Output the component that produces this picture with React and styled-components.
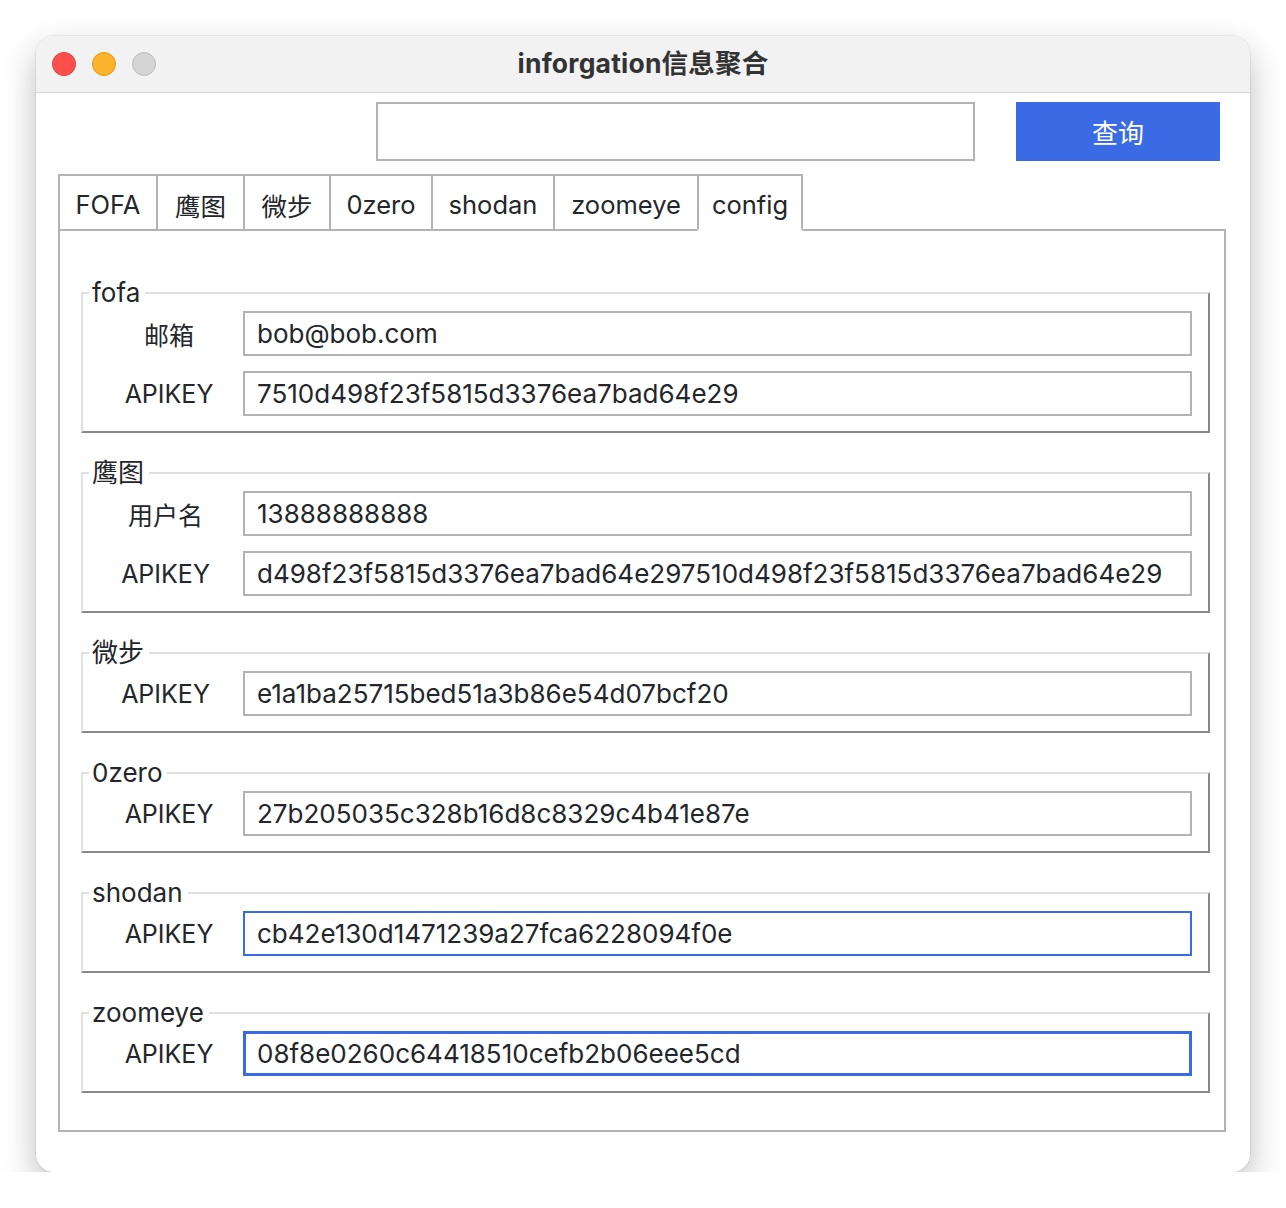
import React from 'react';
import styled, { createGlobalStyle } from 'styled-components';

const GlobalStyle = createGlobalStyle`
  html, body {
    margin: 0;
    padding: 0;
    background: #ffffff;
  }
  * {
    box-sizing: border-box;
  }
`;

const FONT = `Inter, "Noto Sans CJK SC", "Noto Sans", sans-serif`;

const Page = styled.div`
  padding: 36px 0 0 36px;
  font-family: ${FONT};
  color: #23262a;
`;

const Window = styled.div`
  width: 1214px;
  height: 1136px;
  background: #ffffff;
  border-radius: 18px;
  overflow: hidden;
  box-shadow: 0 0 0 1px rgba(0, 0, 0, 0.06), 0 14px 34px rgba(0, 0, 0, 0.26);
  display: flex;
  flex-direction: column;
`;

const TitleBar = styled.div`
  height: 57px;
  flex-shrink: 0;
  background: #f1f2f1;
  border-bottom: 1px solid #d5d5d5;
  display: flex;
  align-items: center;
  padding-left: 16px;
`;

const Lights = styled.div`
  display: flex;
  gap: 16px;
`;

const Light = styled.span`
  width: 24px;
  height: 24px;
  border-radius: 50%;
  background: ${p => p.$c};
  border: 1px solid ${p => p.$b};
`;

const Title = styled.div`
  flex: 1;
  text-align: center;
  margin-right: 120px;
  padding-bottom: 5px;
  font-size: 26.5px;
  font-weight: 700;
  color: #333;
  letter-spacing: 0.2px;
`;

const Body = styled.div`
  flex: 1;
  display: flex;
  flex-direction: column;
  padding: 9px 24px 40px 22px;
`;

const SearchRow = styled.div`
  display: flex;
  justify-content: flex-end;
  gap: 41px;
  padding-right: 6px;
`;

const SearchInput = styled.div`
  width: 599px;
  height: 59px;
  border: 2px solid #b3b3b3;
  background: #fff;
`;

const QueryButton = styled.button`
  width: 204px;
  height: 59px;
  border: none;
  background: #3a6be4;
  color: #fff;
  font-family: ${FONT};
  font-size: 26px;
  padding: 0;
`;

const TabBar = styled.div`
  display: flex;
  margin-top: 13px;
  height: 57px;
`;

const Tab = styled.div`
  display: flex;
  align-items: center;
  justify-content: center;
  width: ${p => p.$w}px;
  padding-top: 3px;
  font-size: 25.5px;
  border-top: 2px solid #b3b3b3;
  border-left: 2px solid #b3b3b3;
  border-right: ${p => (p.$last ? '2px solid #b3b3b3' : 'none')};
  border-bottom: ${p => (p.$active ? '2px solid transparent' : '2px solid #b3b3b3')};
  background: #fff;
`;

const TabFill = styled.div`
  flex: 1;
  border-bottom: 2px solid #b3b3b3;
`;

const Panel = styled.div`
  flex: 1;
  border: 2px solid #b3b3b3;
  border-top: none;
  padding: 47px 14px 0 21px;
  display: flex;
  flex-direction: column;
  gap: 25px;
`;

const Group = styled.fieldset`
  margin: 0;
  padding: 3px 16px 15px 12px;
  border-style: solid;
  border-width: 2px;
  border-color: #e0e0e0 #888888 #888888 #e0e0e0;
  display: flex;
  flex-direction: column;
  gap: 15px;
  min-width: 0;
`;

const Legend = styled.legend`
  margin-left: -6px;
  padding: 0 5px 0 3px;
  font-size: 26px;
  line-height: 30px;
`;

const Row = styled.div`
  display: grid;
  grid-template-columns: 148px 1fr;
  align-items: center;
`;

const Label = styled.div`
  text-align: center;
  font-size: 25px;
  padding-right: ${p => p.$shift || 0}px;
`;

const Field = styled.div`
  height: 45px;
  display: flex;
  align-items: center;
  padding-left: ${p => (p.$focus === 2 ? 11 : 12)}px;
  font-size: 26px;
  background: #fff;
  border: ${p =>
    p.$focus === 2 ? '3px solid #3a6be4' : p.$focus === 1 ? '2px solid #3a6be4' : '2px solid #b3b3b3'};
  white-space: nowrap;
  overflow: hidden;
`;

const tabs = [
  { name: 'FOFA', w: 98 },
  { name: '鹰图', w: 87 },
  { name: '微步', w: 86 },
  { name: '0zero', w: 102 },
  { name: 'shodan', w: 122 },
  { name: 'zoomeye', w: 144 },
  { name: 'config', w: 106 },
];

const groups = [
  {
    title: 'fofa',
    rows: [
      { label: '邮箱', value: 'bob@bob.com' },
      { label: 'APIKEY', value: '7510d498f23f5815d3376ea7bad64e29' },
    ],
  },
  {
    title: '鹰图',
    shift: 7,
    rows: [
      { label: '用户名', value: '13888888888' },
      { label: 'APIKEY', value: 'd498f23f5815d3376ea7bad64e297510d498f23f5815d3376ea7bad64e29' },
    ],
  },
  {
    title: '微步',
    shift: 7,
    rows: [{ label: 'APIKEY', value: 'e1a1ba25715bed51a3b86e54d07bcf20' }],
  },
  {
    title: '0zero',
    rows: [{ label: 'APIKEY', value: '27b205035c328b16d8c8329c4b41e87e' }],
  },
  {
    title: 'shodan',
    rows: [{ label: 'APIKEY', value: 'cb42e130d1471239a27fca6228094f0e', focus: 1 }],
  },
  {
    title: 'zoomeye',
    rows: [{ label: 'APIKEY', value: '08f8e0260c64418510cefb2b06eee5cd', focus: 2 }],
  },
];

export default function App() {
  return (
    <Page>
      <GlobalStyle />
      <Window>
        <TitleBar>
          <Lights>
            <Light $c="#fe4f4b" $b="#e23c38" />
            <Light $c="#feb12a" $b="#e09a1e" />
            <Light $c="#d4d4d4" $b="#bdbdbd" />
          </Lights>
          <Title>inforgation信息聚合</Title>
        </TitleBar>
        <Body>
          <SearchRow>
            <SearchInput />
            <QueryButton>查询</QueryButton>
          </SearchRow>
          <TabBar>
            {tabs.map((t, i) => (
              <Tab key={t.name} $w={t.w} $active={t.name === 'config'} $last={i === tabs.length - 1}>
                {t.name}
              </Tab>
            ))}
            <TabFill />
          </TabBar>
          <Panel>
            {groups.map(g => (
              <Group key={g.title}>
                <Legend>{g.title}</Legend>
                {g.rows.map(r => (
                  <Row key={r.label}>
                    <Label $shift={g.shift}>{r.label}</Label>
                    <Field $focus={r.focus}>{r.value}</Field>
                  </Row>
                ))}
              </Group>
            ))}
          </Panel>
        </Body>
      </Window>
    </Page>
  );
}
